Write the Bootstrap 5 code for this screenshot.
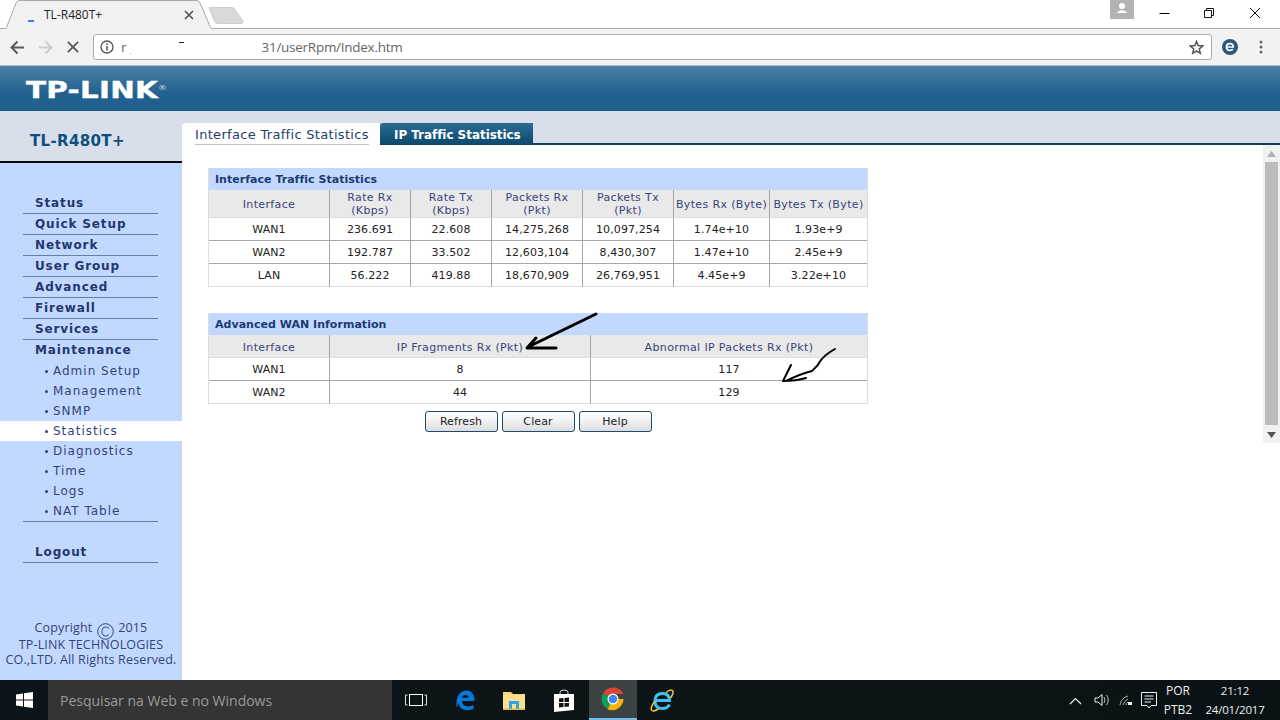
<!DOCTYPE html>
<html lang="pt">
<head>
<meta charset="utf-8">
<title>TL-R480T+</title>
<link href="https://cdn.jsdelivr.net/npm/bootstrap@5.3.0/dist/css/bootstrap.min.css" rel="stylesheet">
<style>
html,body{height:720px;overflow:hidden;margin:0;background:#fff}
.desk{width:1280px;height:720px;position:relative;font-family:"DejaVu Sans",sans-serif;overflow:hidden}
.tabstrip{height:29px;background:#fff;border-bottom:1px solid #aaa;position:relative;font-family:"Open Sans","Liberation Sans",sans-serif}
.tabshape{position:absolute;left:0;top:0}
.tabtitle{position:absolute;left:44px;top:7px;font-size:12px;line-height:16px;color:#222}
.winbtns{position:absolute;left:1110px;top:0}
.toolbar{height:37px;background:#f2f2f2;border-bottom:1px solid #a9bccb;padding-left:10px;gap:13px}
.navico{width:15px;height:15px;flex:none}
.navico.stop{width:14px;height:14px}
.omni{width:1119px;height:26px;flex:none;background:#fff;border:1px solid #ababab;border-radius:3px;font-family:"Open Sans","Liberation Sans",sans-serif;font-size:13.5px;color:#666;padding-left:6px;padding-right:7px}
.infoico{margin-right:7px;flex:none}
.urlend{margin-left:135px;letter-spacing:-.27px}
.extico{margin-left:-3px;flex:none}
.dotsico{margin-left:8px;flex:none}
.brand{height:45px;background:linear-gradient(#4b80a5,#22618f 60%,#1f5f8e);padding:14px 0 0 26px}
.logotext{display:block;font-weight:700;font-size:23.5px;line-height:20px;color:#fff;letter-spacing:.2px;transform:scaleX(1.25);transform-origin:left center;-webkit-text-stroke:.4px #fff;white-space:nowrap}
.logotext sup{font-size:7px;font-weight:400;top:-1.1em;-webkit-text-stroke:0;color:#c9d8e4;position:relative;vertical-align:baseline}
.work{height:569px}
.leftcol{width:182px;flex:none;background:#c2d8fe}
.modelbox{height:52px;background:#d8dfeb;border-bottom:2px solid #0a0a0a;padding:0 0 0 30px;color:#0f4f7f;font-weight:700;font-size:15px;line-height:60px;letter-spacing:.35px}
.sidenav{margin:30px 24px 0 23px;width:135px}
.mainitem{height:21px;border-bottom:1px solid #66809f;padding-left:12px;font-weight:700;font-size:12px;line-height:20px;color:#24366f;letter-spacing:.87px}
.mainitem.noline{border-bottom:0}
.subgroup{border-bottom:1px solid #66809f}
.subitem{height:20px;font-size:12px;line-height:20px;color:#33447c;letter-spacing:1px;position:relative;white-space:nowrap;width:182px;margin-left:-23px;padding-left:53px}
.subitem::before{content:"";position:absolute;left:45px;top:9px;width:3px;height:3px;border-radius:50%;background:#33447c}
.subitem.current{background:#fff}
.logoutwrap{margin-top:20px}
.copyblock{text-align:center;font-family:"Open Sans","Liberation Sans",sans-serif;font-size:12.5px;letter-spacing:.15px;line-height:15.2px;color:#33447c;margin-top:57px;white-space:nowrap}
.copymark{width:17px;height:17px;vertical-align:-5px;margin:-3px 1px}
.rightcol{flex:1 1 auto;min-width:0}
.tabsbar{height:34px;background:#d8dfeb;border-bottom:2px solid #0e4058;padding-top:12px}
.pagetab{height:22px;font-size:13px;line-height:23px;white-space:nowrap}
.pagetab.active{width:198px;background:#fff;border-radius:3px 3px 0 0;color:#1f3d6d;padding-left:13px;position:relative;letter-spacing:.31px}
.pagetab.active span{display:inline-block;border-bottom:1px solid #b9c3cf;line-height:22px;height:21px}
.pagetab.other{width:153px;height:21px;background:linear-gradient(#2b6b95,#0d4a6e);color:#fff;font-weight:700;font-size:12px;padding-left:14px;line-height:24px;border-radius:3px 0 0 0;letter-spacing:-.05px}
.mainpane{flex:1 1 auto;padding:23px 0 0 26px}
.datagrid{table-layout:fixed;width:660px;border-collapse:separate;border-spacing:0;margin:0;font-size:11px;color:#222;border-left:1px solid #ddd;border-right:1px solid #ddd}
.datagrid td,.datagrid th{padding:0;text-align:center;vertical-align:middle;font-weight:400;line-height:13px;border-bottom:1px solid #a6a6a6;border-left:1px solid #a6a6a6;height:23px;white-space:nowrap;letter-spacing:.1px}
.datagrid td:first-child,.datagrid th:first-child{border-left:0}
.datagrid tr:last-child td{border-bottom-color:#ddd}
.datagrid th.gridtitle{background:#c2d8fe;color:#1d3a72;font-weight:700;text-align:left;padding-left:6px;height:22px;border:0;letter-spacing:.03px}
.datagrid th.head{background:#e9e9e9;color:#3a437c;border-bottom-color:#ddd;height:28px;padding-top:1px;letter-spacing:.36px}
.gap2{margin-top:26px}
.datagrid.second th.head{height:23px;padding-top:2px}
.c1{width:120px}.c2{width:81px}.c3{width:91px}.c4{width:96px}.c5{width:261px}
.btnrow{width:660px;margin-top:7px;gap:4px}
.oldbtn{width:73px;height:21px;padding:0;font-size:11px;line-height:18px;color:#222;border:1px solid #1c4a72;border-radius:3px;background:linear-gradient(#fff,#f4f4f4 40%,#dcdcdc);letter-spacing:.1px}
.vscroll{width:17px;height:298px;background:#f1f1f1;flex:none;padding:17px 2px}
.vscroll i{display:block;width:13px;height:263px;background:#bcbcbc}
.vscroll svg{position:absolute;left:1267px}
.upar{top:151px}.dnar{top:432px}
.taskbar{height:40px;background:linear-gradient(90deg,#0b1418,#0d1518 60%,#0b1216);color:#eee;font-family:"Open Sans","Noto Sans",sans-serif}
.startbtn{width:48px;flex:none}
.searchbox{width:344px;flex:none;background:#343434;color:#9a9a9a;font-size:14px;padding-left:12px;line-height:41px;height:40px;white-space:nowrap}
.tbicon{width:48px;height:40px;flex:none;margin-right:1.2px}
.tbicon.on{background:#3c4142;border-bottom:2px solid #76b9ed}
.trayspace{flex:1 1 auto}
.traylang{width:34px;text-align:center;font-size:12px;line-height:19px;flex:none;margin-right:1px}
.trayclock{width:78px;text-align:center;font-size:11.5px;letter-spacing:-.2px;line-height:19px;flex:none;margin-right:6px}
.trayicon{flex:none}
.inkmarks{position:absolute;left:0;top:0;pointer-events:none}
</style>
</head>
<body>
<div class="desk">

  <div class="tabstrip">
    <svg class="tabshape" width="250" height="29">
      <path d="M0 28.500H6L16 3Q17 .5 20 .5H196Q199 .5 200 3L211 28.500" fill="#f2f2f2" stroke="#a8a8a8"/>
      <rect x="6" y="28" width="205" height="2" fill="#f2f2f2"/>
      <path d="M209 7.500H232Q234 7.500 235 9.500L243 21Q243.500 23.500 241 23.500H218Q215 23.500 214.500 21.500Z" fill="#d9d9d9" stroke="#cfcfcf"/>
      <rect x="28" y="20" width="6" height="2" fill="#3b7cf5"/>
      <path d="M185 11L193 19M193 11L185 19" stroke="#555" stroke-width="1.700"/>
    </svg>
    <span class="tabtitle">TL-R480T+</span>
    <svg class="winbtns" width="170" height="28">
      <rect width="24" height="19" fill="#b3b3b3"/>
      <circle cx="12" cy="6" r="3" fill="#fff"/>
      <path d="M7 12.500Q12 8 17 12.500L17 13H7Z" fill="#fff"/>
      <rect x="49.500" y="13" width="10" height="1" fill="#000"/>
      <path d="M94.500 10.500H101.500V17.500H94.500ZM96.500 10.500V8.500H103.500V15.500H101.500" fill="none" stroke="#111"/>
      <path d="M140 8L150 18M150 8L140 18" stroke="#111"/>
    </svg>
  </div>

  <div class="toolbar d-flex align-items-center">
    <svg class="navico" viewBox="0 0 15 15"><path d="M1 7.500H14M7.500 1.500L1.500 7.500L7.500 13.500" fill="none" stroke="#5a5a5a" stroke-width="2"/></svg>
    <svg class="navico" viewBox="0 0 15 15"><path d="M1 7.500H14M7.500 1.500L13.500 7.500L7.500 13.500" fill="none" stroke="#cdcdcd" stroke-width="2"/></svg>
    <svg class="navico stop" viewBox="0 0 15 15"><path d="M2 2L13 13M13 2L2 13" stroke="#5a5a5a" stroke-width="2"/></svg>
    <div class="omni d-flex align-items-center">
      <svg width="14" height="14" viewBox="0 0 14 14" class="infoico"><circle cx="7" cy="7" r="6" fill="none" stroke="#555" stroke-width="1.300"/><rect x="6.300" y="6" width="1.500" height="4.500" fill="#555"/><rect x="6.300" y="3.300" width="1.500" height="1.600" fill="#555"/></svg>
      <span>r</span><span class="urlend">31/userRpm/Index.htm</span>
      <svg width="15" height="15" viewBox="0 0 15 15" class="ms-auto"><path d="M7.500 1.500L9.200 5.600L13.700 6L10.300 8.900L11.300 13.300L7.500 11L3.700 13.300L4.700 8.900L1.300 6L5.800 5.600Z" fill="none" stroke="#555" stroke-width="1.500"/></svg>
    </div>
    <svg width="16" height="16" viewBox="0 0 16 16" class="extico"><circle cx="8" cy="8" r="8" fill="#2b5a7c"/><path d="M4.500 8H11.200Q11.500 4.700 8 4.700Q4.500 4.700 4.500 8Q4.500 11.400 8 11.400Q10 11.400 11 10.300" fill="none" stroke="#fff" stroke-width="1.700"/></svg>
    <svg width="4" height="14" viewBox="0 0 4 14" class="dotsico"><circle cx="2" cy="2" r="1.500" fill="#666"/><circle cx="2" cy="7" r="1.500" fill="#666"/><circle cx="2" cy="12" r="1.500" fill="#666"/></svg>
  </div>

  <div class="brand"><span class="logotext">TP-LINK<sup>®</sup></span></div>

  <div class="work d-flex">
    <div class="leftcol">
      <div class="modelbox">TL-R480T+</div>
      <div class="sidenav">
        <div class="mainitem">Status</div>
        <div class="mainitem">Quick Setup</div>
        <div class="mainitem">Network</div>
        <div class="mainitem">User Group</div>
        <div class="mainitem">Advanced</div>
        <div class="mainitem">Firewall</div>
        <div class="mainitem">Services</div>
        <div class="subgroup">
          <div class="mainitem noline">Maintenance</div>
          <div class="subitem">Admin Setup</div>
          <div class="subitem">Management</div>
          <div class="subitem">SNMP</div>
          <div class="subitem current">Statistics</div>
          <div class="subitem">Diagnostics</div>
          <div class="subitem">Time</div>
          <div class="subitem">Logs</div>
          <div class="subitem">NAT Table</div>
        </div>
        <div class="logoutwrap"><div class="mainitem">Logout</div></div>
      </div>
      <div class="copyblock">Copyright <svg class="copymark" viewBox="0 0 17 17"><circle cx="8.500" cy="8.500" r="7.800" fill="none" stroke="#33447c"/><path d="M12 5.500Q10.800 4 8.700 4Q5 4 5 8.500Q5 13 8.700 13Q10.800 13 12 11.500" fill="none" stroke="#33447c"/></svg> 2015<br>TP-LINK TECHNOLOGIES<br>CO.,LTD. All Rights Reserved.</div>
    </div>

    <div class="rightcol d-flex flex-column">
      <div class="tabsbar d-flex">
        <div class="pagetab active"><span>Interface Traffic Statistics</span></div>
        <div class="pagetab other">IP Traffic Statistics</div>
      </div>
      <div class="d-flex flex-grow-1">
        <div class="mainpane">
          <table class="datagrid">
            <colgroup><col class="c1"><col class="c2"><col class="c2"><col class="c3"><col class="c3"><col class="c4"><col></colgroup>
            <tr><th class="gridtitle" colspan="7">Interface Traffic Statistics</th></tr>
            <tr><th class="head">Interface</th><th class="head">Rate Rx<br>(Kbps)</th><th class="head">Rate Tx<br>(Kbps)</th><th class="head">Packets Rx<br>(Pkt)</th><th class="head">Packets Tx<br>(Pkt)</th><th class="head">Bytes Rx (Byte)</th><th class="head">Bytes Tx (Byte)</th></tr>
            <tr><td>WAN1</td><td>236.691</td><td>22.608</td><td>14,275,268</td><td>10,097,254</td><td>1.74e+10</td><td>1.93e+9</td></tr>
            <tr><td>WAN2</td><td>192.787</td><td>33.502</td><td>12,603,104</td><td>8,430,307</td><td>1.47e+10</td><td>2.45e+9</td></tr>
            <tr><td>LAN</td><td>56.222</td><td>419.88</td><td>18,670,909</td><td>26,769,951</td><td>4.45e+9</td><td>3.22e+10</td></tr>
          </table>
          <table class="datagrid second gap2">
            <colgroup><col class="c1"><col class="c5"><col></colgroup>
            <tr><th class="gridtitle" colspan="3">Advanced WAN Information</th></tr>
            <tr><th class="head">Interface</th><th class="head">IP Fragments Rx (Pkt)</th><th class="head">Abnormal IP Packets Rx (Pkt)</th></tr>
            <tr><td>WAN1</td><td>8</td><td>117</td></tr>
            <tr><td>WAN2</td><td>44</td><td>129</td></tr>
          </table>
          <div class="btnrow d-flex justify-content-center">
            <button type="button" class="btn oldbtn">Refresh</button>
            <button type="button" class="btn oldbtn">Clear</button>
            <button type="button" class="btn oldbtn">Help</button>
          </div>
        </div>
        <div class="ms-auto vscroll">
          <svg class="upar" width="9" height="6"><path d="M4.500 0L9 6H0Z" fill="#b0b0b0"/></svg>
          <i></i>
          <svg class="dnar" width="9" height="6"><path d="M0 0H9L4.500 6Z" fill="#555"/></svg>
        </div>
      </div>
    </div>
  </div>

  <div class="taskbar d-flex align-items-center">
    <div class="startbtn d-flex justify-content-center">
      <svg width="17" height="16" viewBox="0 0 17 16"><path d="M0 2.400L7 1.400V7.500H0ZM8 1.200L17 0V7.500H8ZM0 8.500H7V14.600L0 13.600ZM8 8.500H17V16L8 14.800Z" fill="#fff"/></svg>
    </div>
    <div class="searchbox">Pesquisar na Web e no Windows</div>
    <div class="tbicon d-flex align-items-center justify-content-center">
      <svg width="22" height="14" viewBox="0 0 22 14"><rect x="4.500" y="1.500" width="13" height="11" fill="none" stroke="#fff"/><path d="M2.500 2H.5V12H2.500M19.500 2H21.500V12H19.500" fill="none" stroke="#ddd"/></svg>
    </div>
    <div class="tbicon d-flex align-items-center justify-content-center">
      <svg width="22" height="22" viewBox="0 0 22 22"><path d="M2.500 13C3 5 8 1.500 12.500 1.500C18 1.500 20.700 6 20.500 12H8C8 17 14 19 19.500 16V20C13 22.500 5 21 4.800 14C4.500 16 3.500 17 2.500 18ZM8 8.800H14.500C14.500 5 8.500 5 8 8.800Z" fill="#0a78d7" fill-rule="evenodd"/></svg>
    </div>
    <div class="tbicon d-flex align-items-center justify-content-center">
      <svg width="22" height="19" viewBox="0 0 22 19"><path d="M0 1H8L10 3H22V19H0Z" fill="#f7d774"/><rect y="4" width="22" height="15" fill="#fbe08f"/><path d="M6 19V10H16V19H13V13H9V19Z" fill="#2fa4e8"/><rect y="17.500" width="22" height="1.500" fill="#e0b94f"/></svg>
    </div>
    <div class="tbicon d-flex align-items-center justify-content-center">
      <svg width="22" height="23" viewBox="0 0 22 23"><path d="M7 6V3.500Q7 1 11 1Q15 1 15 3.500V6" fill="none" stroke="#ddd"/><path d="M1 5H21V21L1 23Z" fill="#fff"/><path d="M6 9.500L10.500 9V13H6ZM11.500 8.900L16 8.400V13H11.500ZM6 14H10.500V18L6 18.500ZM11.500 14H16V17.400L11.500 17.900Z" fill="#111"/></svg>
    </div>
    <div class="tbicon on d-flex align-items-center justify-content-center">
      <svg width="24" height="24" viewBox="0 0 24 24"><path d="M12 12L2 6.500A11.500 11.500 0 0 1 22.500 7H12Z" fill="#db4437"/><path d="M12 12L6.500 22A11.500 11.500 0 0 1 2 6.500Z" fill="#0f9d58"/><path d="M12 12H22.500A11.500 11.500 0 0 1 6.500 22.300Z" fill="#f4b400"/><circle cx="12" cy="12" r="5.500" fill="#fff"/><circle cx="12" cy="12" r="4.300" fill="#4285f4"/></svg>
    </div>
    <div class="tbicon d-flex align-items-center justify-content-center">
      <svg width="24" height="23" viewBox="0 0 24 23"><path d="M6 11.500H19.500Q19.500 4.500 12.500 4.500Q5 4.500 5 12Q5 19.500 12.500 19.500Q17.500 19.500 19.500 15.500" fill="none" stroke="#3fc0f0" stroke-width="3"/><path d="M16 3.500C20.500 0 23.500 .5 23 4C22.500 6 21.500 7.500 20.500 9M5 12C2 16 0 20 2 21.500C3.500 22.500 6 21.500 8.500 20" fill="none" stroke="#eec23a" stroke-width="1.500"/></svg>
    </div>
    <div class="trayspace"></div>
    <svg class="trayicon" width="92" height="22" viewBox="0 0 92 22">
      <path d="M1 15L6.500 9.500L12 15" fill="none" stroke="#eee" stroke-width="1.200"/>
      <path d="M26 9H29L33 5.500V16.500L29 13H26Z" fill="none" stroke="#eee"/><path d="M35 8Q37 11 35 14M37.500 6Q41 11 37.500 16" fill="none" stroke="#bbb"/>
      <path d="M51 16Q52 9 59 7M54 16Q55 12 59 10M57 16Q57 14 59 13" fill="none" stroke="#aaa"/><rect x="59" y="13" width="4" height="3" fill="#eee"/>
      <path d="M72.500 3.500H87.500V16.500H82L80 19L78 16.500H72.500ZM75.500 7H84.500M75.500 10H84.500M75.500 13H82" fill="none" stroke="#eee"/>
    </svg>
    <div class="traylang">POR<br>PTB2</div>
    <div class="trayclock">21:12<br>24/01/2017</div>
  </div>

  <svg class="inkmarks" width="1280" height="720" viewBox="0 0 1280 720">
    <rect x="179" y="42" width="5" height="1" fill="#222"/>
    <rect x="130" y="53" width="1" height="1" fill="#c9a050"/>
    <g fill="none" stroke="#000" stroke-linecap="round" stroke-linejoin="round">
      <path d="M596 314L528 347M536 338L527 348H556" stroke-width="3"/>
      <path d="M835 349Q826 354 821 360Q818 366 812 371Q800 374 786 381M791 365L783 381Q796 381 806 378" stroke-width="2"/>
    </g>
  </svg>
</div>
<script src="https://cdn.jsdelivr.net/npm/bootstrap@5.3.0/dist/js/bootstrap.bundle.min.js"></script>
</body>
</html>
